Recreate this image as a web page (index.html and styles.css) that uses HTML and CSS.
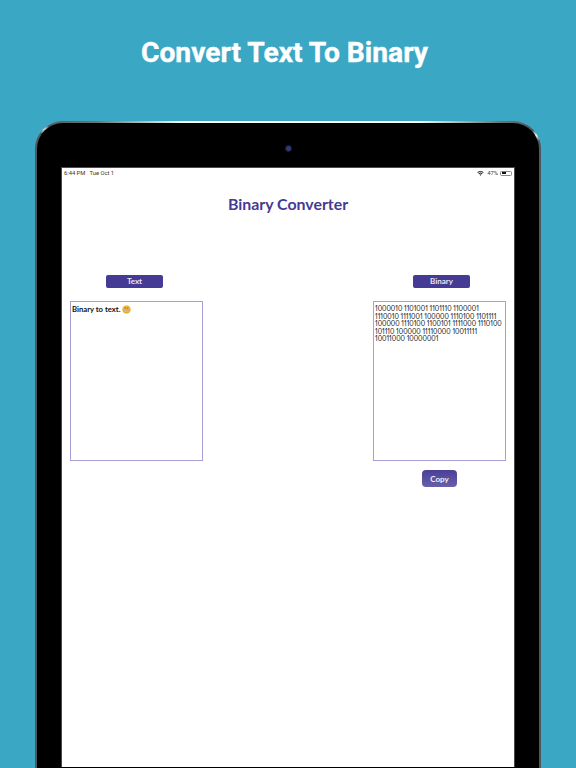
FILE: index.html
```html
<!DOCTYPE html>
<html lang="en">
<head>
<meta charset="utf-8">
<title>Convert Text To Binary</title>
<link rel="stylesheet" href="styles.css">
</head>
<body>
<header class="promo">
  <h1 class="promo-title">Convert Text To Binary</h1>
</header>
<div class="device">
  <div class="device-inner">
    <div class="bezel-top"><span class="camera"></span></div>
    <main class="screen">
      <div class="status">
        <span class="status-time">6:44 PM&nbsp;&nbsp; Tue Oct 1</span>
        <span class="status-right">
          <svg class="wifi" viewBox="0 0 16 12" aria-hidden="true"><path d="M8 11.5 5.6 8.8a3.4 3.4 0 0 1 4.8 0zM4.5 7.6 3 6a7 7 0 0 1 10 0l-1.500 1.600a5 5 0 0 0-7 0zM1.900 5 .3 3.300a10.800 10.800 0 0 1 15.400 0L14.100 5a8.600 8.600 0 0 0-12.200 0z"/></svg>
          <span>47%</span>
          <span class="battery"><span class="battery-level"></span></span>
        </span>
      </div>
      <h2 class="app-title">Binary Converter</h2>
      <div class="columns">
        <section class="col">
          <div class="label label-text">Text</div>
          <div class="box box-text">Binary to text.
            <svg class="emoji" viewBox="0 0 20 20" aria-hidden="true"><circle cx="10" cy="10" r="9.500" fill="#f6b93b"/><rect x="3.500" y="9.500" width="13" height="6" rx="3" fill="#f3f3f3" stroke="#8a6a20" stroke-width=".8"/><path d="M3.500 12.500h13M7 9.500v6M10 9.500v6M13 9.500v6" stroke="#8a6a20" stroke-width=".7"/><circle cx="7" cy="6.500" r="1.300" fill="#6b4a12"/><circle cx="13" cy="6.500" r="1.300" fill="#6b4a12"/></svg>
          </div>
        </section>
        <section class="col">
          <div class="label label-binary">Binary</div>
          <div class="box box-binary">1000010 1101001 1101110 1100001 1110010 1111001 100000 1110100 1101111 100000 1110100 1100101 1111000 1110100 101110 100000 11110000 10011111 10011000 10000001</div>
          <button class="copy" type="button">Copy</button>
        </section>
      </div>
    </main>
  </div>
</div>
</body>
</html>
```

FILE: styles.css
```css
html, body {
  margin: 0;
  height: 768px;
  overflow: hidden;
}
body {
  background: #3aa7c4;
  font-family: "Lato", "Liberation Sans", sans-serif;
}
.promo {
  height: 121px;
  box-sizing: border-box;
  padding: 35px 7px 0 0;
}
.promo-title {
  margin: 0;
  text-align: center;
  color: #fff;
  font-family: "Roboto", sans-serif;
  font-weight: 700;
  font-size: 28.200px;
  line-height: 36px;
  -webkit-text-stroke: 0.400px #fff;
}
.device {
  width: 506px;
  height: 647px;
  margin-left: 35px;
  box-sizing: border-box;
  padding: 2px 2px 0;
  border-radius: 28px 28px 0 0;
  background:
    radial-gradient(circle 6px at 8px 7px, #fff, rgba(255, 255, 255, 0)),
    radial-gradient(circle 6px at 502px 14px, #fff, rgba(255, 255, 255, 0)),
    linear-gradient(90deg, #50565b 0, #6d7276 12%, #fff 30%, #fff 75%, #6d7276 92%, #50565b 100%) top / 100% 4px no-repeat,
    #50565b;
}
.device-inner {
  height: 100%;
  box-sizing: border-box;
  background: #000;
  border-radius: 26px 26px 0 0;
  padding: 0 24px;
}
.bezel-top {
  height: 44px;
  display: flex;
  justify-content: center;
  align-items: center;
  padding-top: 6px;
  box-sizing: border-box;
}
.camera {
  width: 5px;
  height: 5px;
  border-radius: 50%;
  background: #2c3a80;
  border: 1px solid #1c1c1c;
}
.screen {
  height: 600px;
  background: #fff;
  border: 1px solid #4a4a4a;
  border-bottom: 0;
  box-sizing: border-box;
  padding: 0 8px;
}
.status {
  display: flex;
  justify-content: space-between;
  align-items: center;
  height: 10px;
  margin: 0 -6px 0 -6px;
  font-family: "Roboto", sans-serif;
  font-size: 5.800px;
  color: #333;
}
.status-right {
  display: flex;
  align-items: center;
  gap: 2px;
}
.wifi {
  width: 7px;
  height: 5px;
  fill: #222;
  margin-right: 1px;
}
.battery {
  display: block;
  width: 12px;
  height: 5px;
  border: 0.500px solid #888;
  border-radius: 1.500px;
  box-sizing: border-box;
  padding: 0.500px;
}
.battery-level {
  display: block;
  width: 47%;
  height: 100%;
  background: #111;
}
.app-title {
  margin: 16px 0 0;
  text-align: center;
  color: #453a94;
  font-weight: 700;
  font-size: 15.900px;
  line-height: 20px;
}
.columns {
  display: flex;
  justify-content: space-between;
  margin-top: 61px;
}
.col {
  width: 133px;
}
.label {
  width: 57px;
  height: 13px;
  background: #453a94;
  border-radius: 2px;
  color: #e8e6f5;
  font-size: 8px;
  font-weight: 700;
  line-height: 13px;
  text-align: center;
}
.label-text {
  margin-left: 36px;
}
.label-binary {
  margin-left: 40px;
}
.box {
  box-sizing: border-box;
  height: 160px;
  margin-top: 13px;
  border: 1px solid #a79fd6;
  padding: 3px 1px;
  color: #111;
  font-size: 6.700px;
  font-variant-numeric: proportional-nums;
  line-height: 7.500px;
}
.box-text {
  font-size: 7.700px;
  font-weight: 700;
  padding: 3px 1px;
  line-height: 9px;
}
.emoji {
  width: 9px;
  height: 9px;
  vertical-align: -2px;
}
.copy {
  display: block;
  width: 35px;
  height: 17px;
  margin: 9px 0 0 49px;
  padding: 0;
  border: 0;
  border-radius: 4px;
  background: linear-gradient(#4a3f97, #6a5fa8);
  color: #f1f0f8;
  font-family: "Lato", sans-serif;
  font-size: 8px;
  font-weight: 700;
}
```
